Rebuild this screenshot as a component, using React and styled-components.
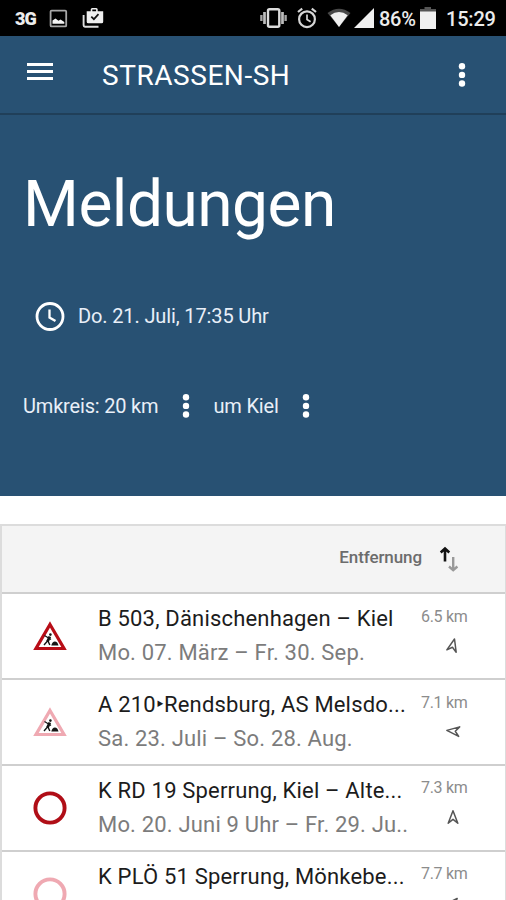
import React from "react";
import styled, { createGlobalStyle } from "styled-components";

const messages = [
  {
    title: "B 503, Dänischenhagen – Kiel",
    date: "Mo. 07. März – Fr. 30. Sep.",
    distance: "6.5 km",
    sign: "works",
    angle: 14,
  },
  {
    title: "A 210‣Rendsburg, AS Melsdo...",
    date: "Sa. 23. Juli – So. 28. Aug.",
    distance: "7.1 km",
    sign: "works",
    planned: true,
    angle: -84,
  },
  {
    title: "K RD 19 Sperrung, Kiel – Alte...",
    date: "Mo. 20. Juni 9 Uhr – Fr. 29. Ju..",
    distance: "7.3 km",
    sign: "closed",
    angle: 0,
  },
  {
    title: "K PLÖ 51 Sperrung, Mönkebe...",
    distance: "7.7 km",
    sign: "closed",
    planned: true,
    angle: 42,
  },
];

function StatusIcons() {
  return (
    <>
      <Network>3G</Network>
      <StatusIcon $left={13} width="19" height="19" viewBox="0 0 19 19">
        <rect x="1.6" y="1.6" width="15.6" height="15.8" rx="1" fill="none" stroke="#a8a8a8" strokeWidth="1.8" />
        <path d="M3.5 14.8v-3.2l3-2.2 3 2.3 2-1.2 3.8 2.5v1.8z" fill="#f5f5f5" />
      </StatusIcon>
      <StatusIcon $left={14} width="22" height="22" viewBox="0 0 22 22">
        <path d="M1.6 8v10.3q0 1.4 1.4 1.4h13.5" fill="none" stroke="#dedede" strokeWidth="1.9" />
        <path
          fillRule="evenodd"
          d="M4.7 4.2h4V2.5Q8.7 1 10.2 1h4q1.5 0 1.5 1.5v1.7h5.5v10.5q0 1.600-1.600 1.600H6.300q-1.600 0-1.600-1.600zM10.300 4.200h3.800V2.600h-3.800z"
          fill="#efefef"
        />
        <path d="M9.300 9.600l2.600 2.600 4.600-5" fill="none" stroke="#111" strokeWidth="1.700" />
      </StatusIcon>
    </>
  );
}

function VibrateIcon() {
  return (
    <svg width="27" height="20" viewBox="0 0 27 20">
      <rect x="8" y="1.200" width="11.300" height="17.600" rx="1.500" fill="none" stroke="#dcdcdc" strokeWidth="2.400" />
      <path d="M4.500 4v12M22.500 4v12" stroke="#bdbdbd" strokeWidth="2.700" />
      <path d="M1.400 7v6M25.600 7v6" stroke="#a5a5a5" strokeWidth="2.400" />
    </svg>
  );
}

function AlarmIcon() {
  return (
    <svg width="20" height="22" viewBox="0 0 20 22">
      <g fill="none" stroke="#d6d6d6">
        <circle cx="10" cy="12.200" r="7.900" strokeWidth="2.200" />
        <path d="M1 5l4.200-3.400M19 5l-4.200-3.400" strokeWidth="2.200" />
        <path d="M10 7.500v5l3.600 2.300" strokeWidth="1.700" />
      </g>
    </svg>
  );
}

function WifiIcon() {
  return (
    <svg width="24" height="20" viewBox="0 0 24 20">
      <path d="M.5 5Q12-3.500 23.500 5L12 19z" fill="#484848" />
      <path d="M3.300 7.200Q12 .9 20.700 7.200L12 19z" fill="#f0f0f0" />
    </svg>
  );
}

function BatteryIcon() {
  return (
    <svg width="16" height="22" viewBox="0 0 16 22">
      <path d="M4.500 0h6.500v2H16v3H0V2h4.500z" fill="#555" />
      <path d="M0 4.500h16V22H0z" fill="#f0f0f0" />
    </svg>
  );
}

function Dots() {
  return (
    <svg width="8" height="26" viewBox="0 0 8 26" fill="#fff">
      <circle cx="4" cy="4.300" r="3.200" />
      <circle cx="4" cy="12.900" r="3.200" />
      <circle cx="4" cy="21.500" r="3.200" />
    </svg>
  );
}

function WorksSign({ planned }) {
  return (
    <svg width="34" height="30" viewBox="0 0 34 30">
      <path
        d="M17 3.500L31 27.500H3z"
        fill="#fff"
        stroke={planned ? "#efa9b2" : "#b80d17"}
        strokeWidth="3.200"
      />
      <g fill="none" stroke="#151515">
        <path d="M11.500 14.500l6.500 4" strokeWidth="1.100" />
        <path d="M16.800 15.500l-2.300 5" strokeWidth="2.800" />
        <path d="M14.500 20l-3.500 4M15 20l1.800 4" strokeWidth="1.400" />
      </g>
      <circle cx="17.400" cy="13.600" r="1.300" fill="#151515" />
      <path d="M18.300 24.400q1-4 3.600-4t3.600 4z" fill="#151515" />
    </svg>
  );
}

function ClosedSign({ planned }) {
  return (
    <svg width="34" height="34" viewBox="0 0 34 34">
      <circle cx="17" cy="17" r="14.600" fill="#fff" stroke={planned ? "#efa9b2" : "#b00e17"} strokeWidth="3.900" />
    </svg>
  );
}

function DirectionIcon({ angle }) {
  return (
    <svg width="18" height="18" viewBox="0 0 18 18">
      <path
        transform={`rotate(${angle} 9 9)`}
        d="M9 2.800L4.200 15.200 9 11.300l4.800 3.900z"
        fill="none"
        stroke="#555"
        strokeWidth="1.500"
        strokeLinejoin="round"
      />
    </svg>
  );
}

function App() {
  return (
    <Screen>
      <GlobalStyle />
      <StatusBar>
        <StatusIcons />
        <StatusRight>
          <VibrateIcon />
          <AlarmIcon />
          <WifiIcon />
          <svg width="20" height="20" viewBox="0 0 20 20">
            <path d="M20 0v20H0z" fill="#f0f0f0" />
          </svg>
          <Percent>86%</Percent>
          <BatteryIcon />
          <Clock>15:29</Clock>
        </StatusRight>
      </StatusBar>

      <AppBar>
        <MenuButton aria-label="Menu">
          <span />
          <span />
          <span />
        </MenuButton>
        <AppTitle>STRASSEN-SH</AppTitle>
        <IconButton aria-label="Optionen">
          <Dots />
        </IconButton>
      </AppBar>

      <Hero>
        <Heading>Meldungen</Heading>
        <Updated>
          <svg width="30" height="30" viewBox="0 0 30 30" fill="none" stroke="#fff">
            <circle cx="15" cy="15.500" r="13" strokeWidth="2.800" />
            <path d="M14.500 8.500v8l6 3.600" strokeWidth="2.300" />
          </svg>
          <HeroText $spacing={-0.13}>Do. 21. Juli, 17:35 Uhr</HeroText>
        </Updated>
        <Filters>
          <HeroText $spacing={-0.18}>Umkreis: 20 km</HeroText>
          <IconButton aria-label="Umkreis">
            <Dots />
          </IconButton>
          <HeroText $spacing={-0.18}>um Kiel</HeroText>
          <IconButton aria-label="Ort">
            <Dots />
          </IconButton>
        </Filters>
      </Hero>

      <List>
        <SortBar>
          <SortLabel>Entfernung</SortLabel>
          <svg width="20" height="26" viewBox="0 0 20 26" fill="none">
            <path d="M6 15.500V4M1.700 6.500L6 2.600l4.300 3.900" stroke="#111" strokeWidth="2.600" />
            <path d="M14.200 11v12M10 20.500l4.200 3.700 4.200-3.700" stroke="#999" strokeWidth="2.400" />
          </svg>
        </SortBar>
        {messages.map((m) => (
          <Row key={m.title}>
            <SignCell>
              {m.sign === "works" ? <WorksSign planned={m.planned} /> : <ClosedSign planned={m.planned} />}
            </SignCell>
            <RowText>
              <RowTitle>{m.title}</RowTitle>
              {m.date && <RowDate>{m.date}</RowDate>}
            </RowText>
            <Distance>
              <span>{m.distance}</span>
              <DirectionIcon angle={m.angle} />
            </Distance>
          </Row>
        ))}
      </List>
    </Screen>
  );
}

export default App;

const GlobalStyle = createGlobalStyle`
  * {
    box-sizing: border-box;
  }
  body {
    margin: 0;
    background: #fff;
    overflow: hidden;
    font-family: Roboto, sans-serif;
  }
  svg {
    display: block;
    flex: none;
  }
`;

const Screen = styled.div`
  width: 506px;
  height: 900px;
  overflow: hidden;
  background: #fff;
`;

const StatusBar = styled.div`
  display: flex;
  align-items: center;
  height: 36px;
  padding: 0 11px 0 15px;
  background: #000;
  color: #ececec;
`;

const Network = styled.span`
  width: 21px;
  font-size: 18px;
  font-weight: 900;
  letter-spacing: -1px;
  white-space: nowrap;
`;

const StatusIcon = styled.svg`
  margin-left: ${(props) => props.$left}px;
`;

const StatusRight = styled.div`
  display: flex;
  align-items: center;
  margin-left: auto;
  & > svg:nth-child(2) {
    margin-left: 10px;
  }
  & > svg:nth-child(3) {
    margin-left: 10px;
  }
  & > svg:nth-child(4) {
    margin-left: 3px;
  }
`;

const Percent = styled.span`
  width: 37px;
  margin: 2px 4px 0 5px;
  font-size: 20px;
  font-weight: 500;
  letter-spacing: -0.3px;
  white-space: nowrap;
`;

const Clock = styled.span`
  width: 49px;
  margin: 2px 0 0 10px;
  font-size: 20px;
  font-weight: 500;
  letter-spacing: -0.2px;
  white-space: nowrap;
`;

const AppBar = styled.header`
  display: flex;
  align-items: center;
  height: 79px;
  padding: 0 40px 0 27px;
  background: #285173;
  border-bottom: 2px solid #203f59;
`;

const MenuButton = styled.button`
  display: flex;
  flex-direction: column;
  gap: 4px;
  width: 26px;
  margin: 0 49px 7px 0;
  padding: 0;
  border: none;
  background: none;
  span {
    height: 3px;
    background: #fff;
  }
`;

const AppTitle = styled.h1`
  flex: 1;
  margin: 1px 0 0;
  color: #fff;
  font-size: 28px;
  font-weight: 400;
  letter-spacing: 0.55px;
  white-space: nowrap;
`;

const IconButton = styled.button`
  padding: 0;
  border: none;
  background: none;
`;

const Hero = styled.section`
  height: 381px;
  padding: 52px 23px 0;
  background: #285173;
  color: #fff;
`;

const Heading = styled.h2`
  margin: 0;
  font-size: 64px;
  font-weight: 400;
  line-height: 75px;
  letter-spacing: -0.5px;
`;

const Updated = styled.div`
  display: flex;
  align-items: center;
  gap: 13px;
  margin-top: 59px;
  padding-left: 12px;
`;

const HeroText = styled.span`
  color: #e9eff8;
  font-size: 20px;
  line-height: 26px;
  letter-spacing: ${(props) => props.$spacing}px;
  white-space: nowrap;
`;

const Filters = styled.div`
  display: flex;
  align-items: center;
  margin-top: 62px;
  button {
    margin: 0 23.5px 0 23.5px;
  }
`;

const List = styled.main`
  margin-top: 28px;
  border: 1px solid #dcdcdc;
  border-width: 2px 1px 0 2px;
`;

const SortBar = styled.div`
  display: flex;
  align-items: center;
  justify-content: flex-end;
  height: 66.4px;
  padding: 0 46px 1px 0;
  background: #f4f4f4;
`;

const SortLabel = styled.span`
  margin: 0 17px 3px 0;
  color: #6c6c6c;
  font-size: 17px;
  font-weight: 500;
  letter-spacing: -0.1px;
`;

const Row = styled.div`
  display: flex;
  height: 85.8px;
  border-top: 2px solid #cfcfcf;
`;

const SignCell = styled.div`
  display: flex;
  justify-content: center;
  align-items: center;
  width: 96px;
`;

const RowText = styled.div`
  width: 323px;
  padding-top: 8px;
  font-size: 22px;
  line-height: 34px;
  letter-spacing: 0.18px;
  white-space: nowrap;
`;

const RowTitle = styled.div`
  color: #1c1c1c;
`;

const RowDate = styled.div`
  color: #7c7c7c;
`;

const Distance = styled.div`
  display: flex;
  flex-direction: column;
  padding-top: 12.4px;
  color: #8c8c8c;
  font-size: 16px;
  line-height: 20px;
  letter-spacing: -0.3px;
  white-space: nowrap;
  svg {
    margin: 9.5px 0 0 23px;
  }
`;
